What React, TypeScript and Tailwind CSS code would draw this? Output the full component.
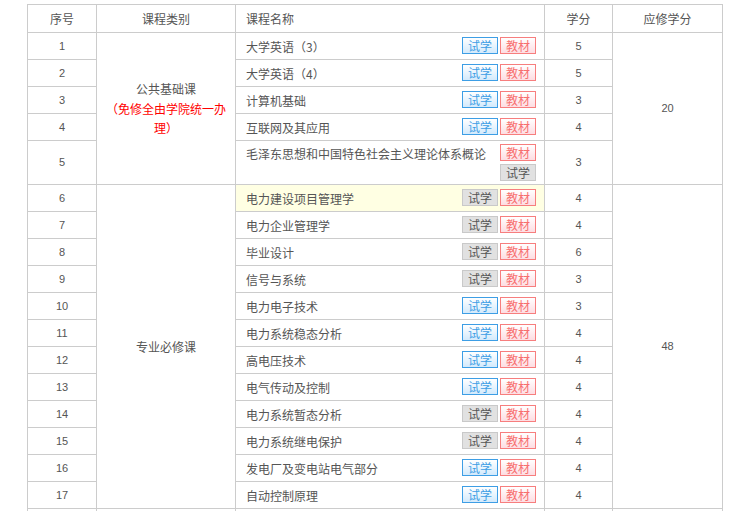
import React from 'react';

type Trial = 'blue' | 'gray';

interface Course {
    no: number;
    name: string;
    trial: Trial;
    credit: number;
}

const basic: Course[] = [
    {no: 1, name: '大学英语（3）', trial: 'blue', credit: 5},
    {no: 2, name: '大学英语（4）', trial: 'blue', credit: 5},
    {no: 3, name: '计算机基础', trial: 'blue', credit: 3},
    {no: 4, name: '互联网及其应用', trial: 'blue', credit: 4},
    {no: 5, name: '毛泽东思想和中国特色社会主义理论体系概论', trial: 'gray', credit: 3},
];

const major: Course[] = [
    {no: 6, name: '电力建设项目管理学', trial: 'gray', credit: 4},
    {no: 7, name: '电力企业管理学', trial: 'gray', credit: 4},
    {no: 8, name: '毕业设计', trial: 'gray', credit: 6},
    {no: 9, name: '信号与系统', trial: 'gray', credit: 3},
    {no: 10, name: '电力电子技术', trial: 'blue', credit: 3},
    {no: 11, name: '电力系统稳态分析', trial: 'blue', credit: 4},
    {no: 12, name: '高电压技术', trial: 'blue', credit: 4},
    {no: 13, name: '电气传动及控制', trial: 'blue', credit: 4},
    {no: 14, name: '电力系统暂态分析', trial: 'gray', credit: 4},
    {no: 15, name: '电力系统继电保护', trial: 'gray', credit: 4},
    {no: 16, name: '发电厂及变电站电气部分', trial: 'blue', credit: 4},
    {no: 17, name: '自动控制原理', trial: 'blue', credit: 4},
];

const cell = "border border-[#cccccc] p-0";
const num = "font-['Liberation_Sans',sans-serif] text-[11px] text-[#555] text-center";

const TrialBtn = ({type}: { type: Trial }) => (
    type === 'blue'
        ? <span className="block w-[36px] h-[17px] border border-[#3d9ee5] bg-linear-to-b from-white to-[#d3eafc] text-[#3d9ee5] text-[12px] leading-[15px] text-center">试学</span>
        : <span className="block w-[36px] h-[17px] border border-[#c9c9c9] bg-[#e1e1e1] text-[#555] text-[12px] leading-[15px] text-center">试学</span>
);

const BookBtn = () => (
    <span className="block w-[36px] h-[17px] border border-[#f77e7e] bg-linear-to-b from-white to-[#fddde2] text-[#f76f6f] text-[12px] leading-[15px] text-center">教材</span>
);

const NameCell = ({course, hover}: { course: Course, hover?: boolean }) => {
    const wraps = course.no === 5;
    return (
        <td className={`${cell} pl-[10px] pr-[8px] ${hover ? 'bg-[#ffffe3]' : ''}`}>
            {wraps ? (
                <div className="flex justify-between items-start py-[3px]">
                    <span className="leading-[18px] pt-[1px]">{course.name}</span>
                    <div className="flex flex-col gap-[3px]">
                        <BookBtn/>
                        <TrialBtn type={course.trial}/>
                    </div>
                </div>
            ) : (
                <div className="flex justify-between items-center">
                    <span className="leading-[18px] pt-[2px]">{course.name}</span>
                    <div className="flex gap-[2px] pb-[2px]">
                        <TrialBtn type={course.trial}/>
                        <BookBtn/>
                    </div>
                </div>
            )}
        </td>
    );
};

const App = () => {
    return (
        <div className="h-[511px] overflow-hidden bg-white pl-[27px] pt-[4px] font-['Noto_Sans_CJK_SC',sans-serif] text-[12px] text-[#555]">
            <table className="table-fixed border-collapse w-[695px]">
                <colgroup>
                    <col className="w-[69px]"/>
                    <col className="w-[139px]"/>
                    <col className="w-[309px]"/>
                    <col className="w-[68px]"/>
                    <col className="w-[110px]"/>
                </colgroup>
                <thead>
                <tr className="h-[28px]">
                    <th className={`${cell} font-normal text-center`}>序号</th>
                    <th className={`${cell} font-normal text-center`}>课程类别</th>
                    <th className={`${cell} font-normal text-left pl-[10px]`}>课程名称</th>
                    <th className={`${cell} font-normal text-center`}>学分</th>
                    <th className={`${cell} font-normal text-center`}>应修学分</th>
                </tr>
                </thead>
                <tbody>
                {basic.map((c, i) => (
                    <tr key={c.no} className={c.no === 5 ? 'h-[44px]' : 'h-[27px]'}>
                        <td className={`${cell} ${num}`}>{c.no}</td>
                        {i === 0 && (
                            <td rowSpan={5} className={`${cell} text-center px-[8px] leading-[19.5px]`}>
                                <div>公共基础课</div>
                                <div className="text-[#ff0000]">（免修全由学院统一办理）</div>
                            </td>
                        )}
                        <NameCell course={c}/>
                        <td className={`${cell} ${num}`}>{c.credit}</td>
                        {i === 0 && <td rowSpan={5} className={`${cell} ${num}`}>20</td>}
                    </tr>
                ))}
                {major.map((c, i) => (
                    <tr key={c.no} className="h-[27px]">
                        <td className={`${cell} ${num}`}>{c.no}</td>
                        {i === 0 && <td rowSpan={12} className={`${cell} text-center`}>专业必修课</td>}
                        <NameCell course={c} hover={c.no === 6}/>
                        <td className={`${cell} ${num}`}>{c.credit}</td>
                        {i === 0 && <td rowSpan={12} className={`${cell} ${num}`}>48</td>}
                    </tr>
                ))}
                {/* next group starts below the fold */}
                <tr className="h-[27px]">
                    <td className={cell}></td>
                    <td className={cell}></td>
                    <td className={cell}></td>
                    <td className={cell}></td>
                    <td className={cell}></td>
                </tr>
                </tbody>
            </table>
        </div>
    );
};

export default App;
